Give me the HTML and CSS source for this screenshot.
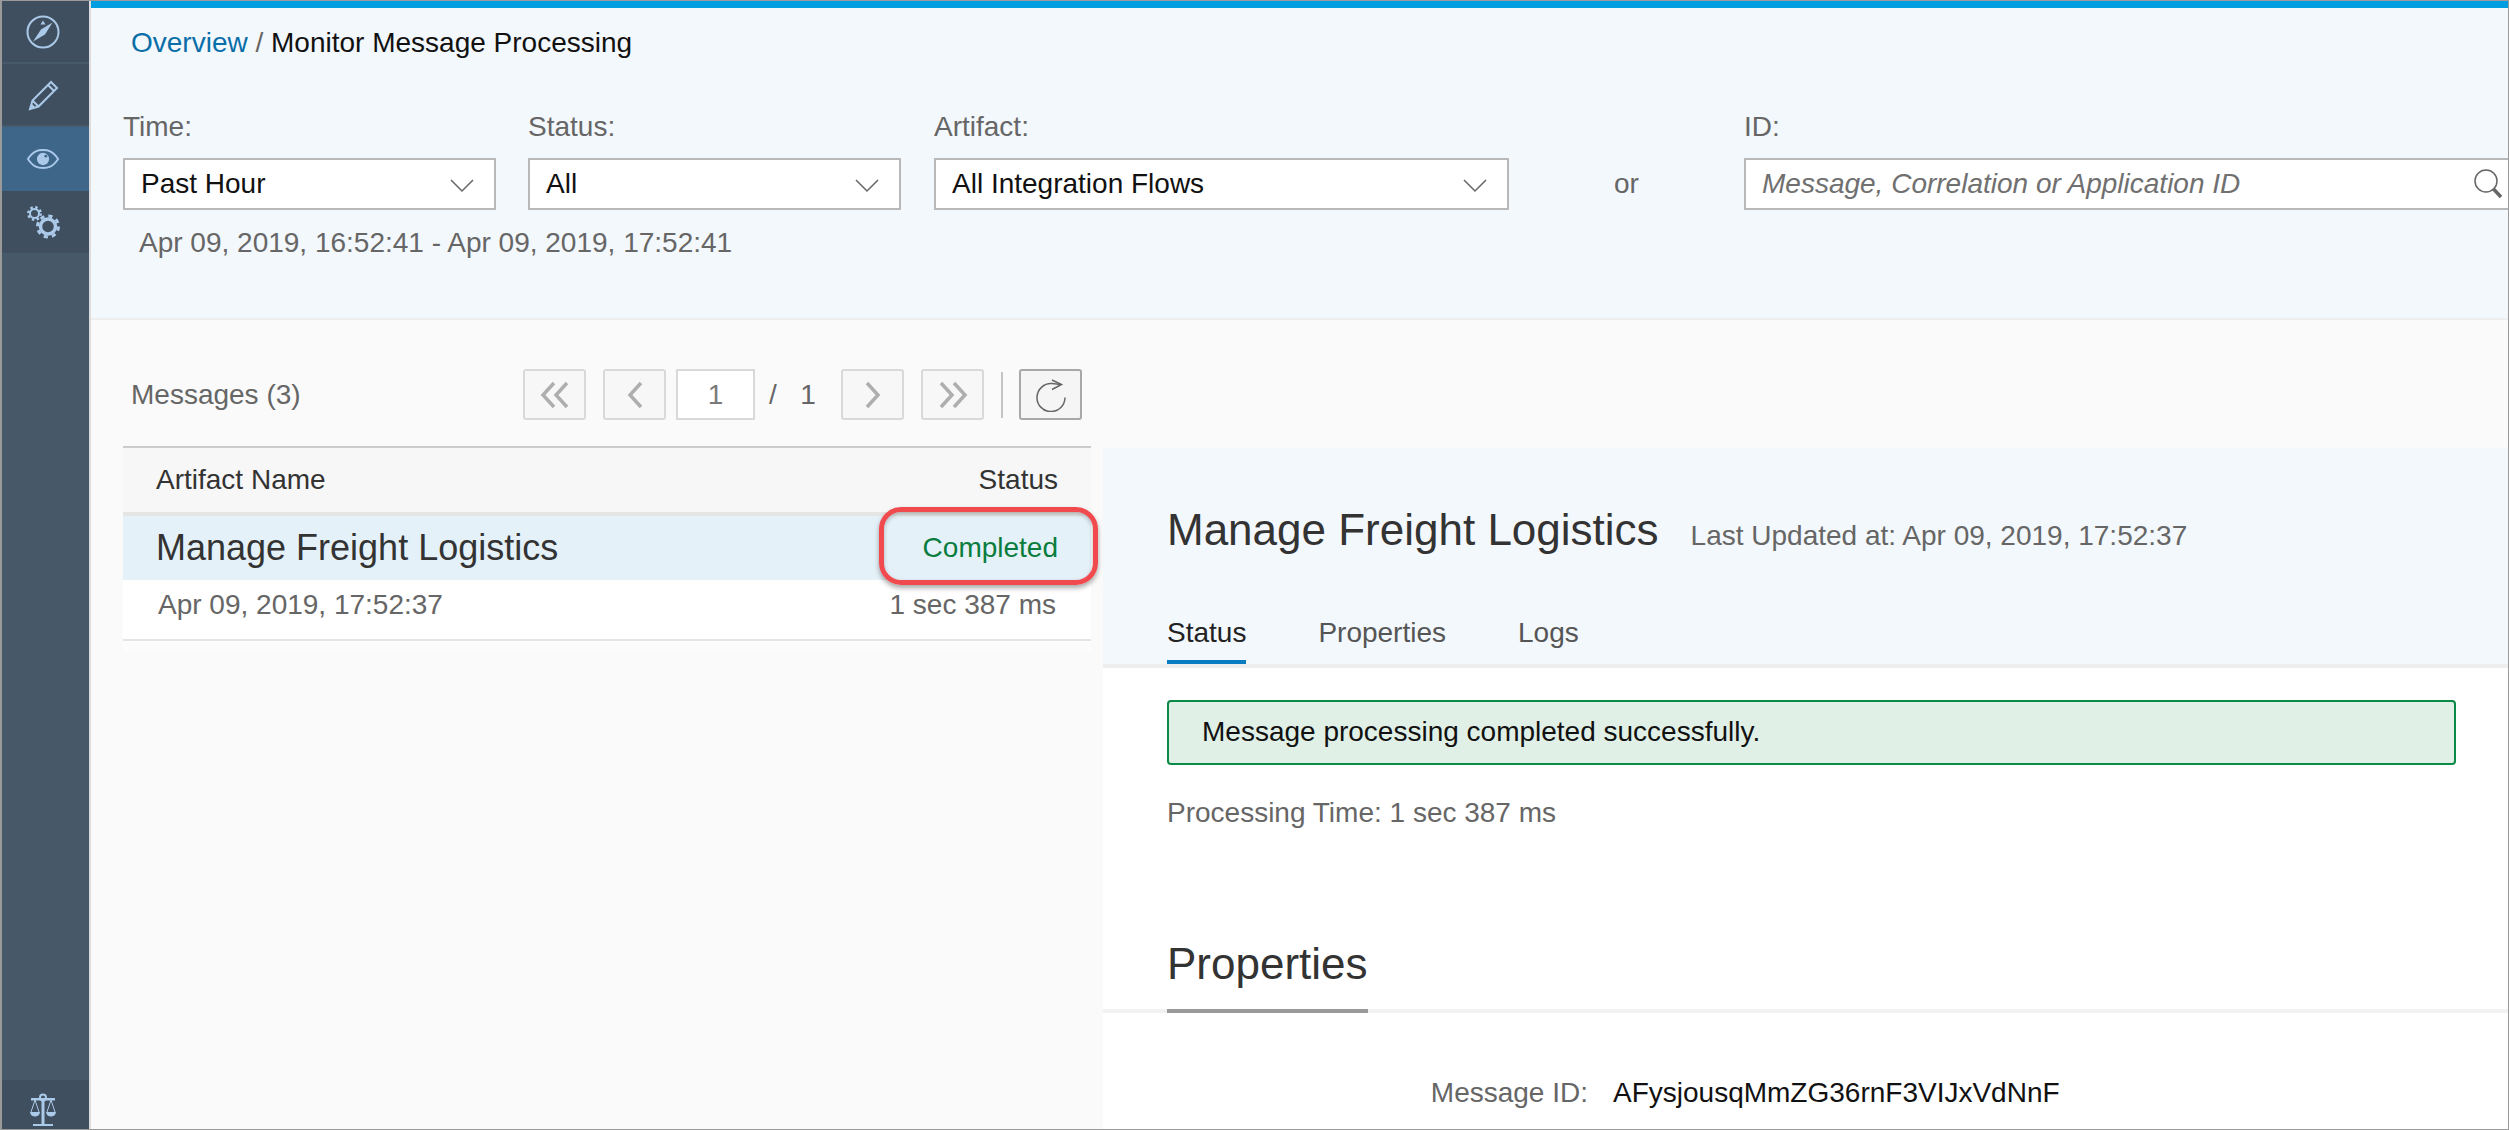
FILE: index.html
```html
<!DOCTYPE html>
<html lang="en">
<head>
    <meta charset="UTF-8">
    <title>Monitor Message Processing</title>
    <link rel="stylesheet" href="styles.css">
</head>
<body>
    <div class="frame">
        <aside class="sidebar">
            <a class="side-item">
                <svg width="36" height="36" viewBox="0 0 36 36"><circle cx="18" cy="18" r="15.5" fill="none" stroke="#abc9e8" stroke-width="2"/><path d="M27.5 8.5 L20 20.5 L8 27.5 L16 15.5 Z" fill="#abc9e8"/><path d="M18 6.5 L20.5 10.5 L15.5 10.5 Z" fill="#abc9e8"/></svg>
            </a>
            <a class="side-item">
                <svg width="32" height="32" viewBox="0 0 32 32"><path d="M3 30 L5.5 21.5 L24 3 L30 9 L11.5 27.5 Z M5.5 21.5 L11.5 27.5 M21 6 L27 12" fill="none" stroke="#abc9e8" stroke-width="2"/><path d="M3 30 L4.5 24.5 L8.5 28.5 Z" fill="#abc9e8"/></svg>
            </a>
            <a class="side-item active">
                <svg width="34" height="24" viewBox="0 0 36 24"><path d="M2 12 C8 3 13 2.500 18 2.500 C23 2.500 28 3 34 12 C28 21 23 21.500 18 21.500 C13 21.500 8 21 2 12 Z" fill="none" stroke="#abc9e8" stroke-width="2"/><circle cx="18" cy="12" r="6.500" fill="#abc9e8"/><circle cx="21" cy="9" r="1.500" fill="#3d6689"/></svg>
            </a>
            <a class="side-item gears">
                <svg width="36" height="36" viewBox="0 0 36 36"><circle cx="9.500" cy="9.500" r="4.500" fill="none" stroke="#abc9e8" stroke-width="2"/><circle cx="9.500" cy="9.500" r="6.200" fill="none" stroke="#abc9e8" stroke-width="2.500" stroke-dasharray="2.400 2.470"/><circle cx="23" cy="22.500" r="7.500" fill="none" stroke="#abc9e8" stroke-width="3.500"/><circle cx="23" cy="22.500" r="10.500" fill="none" stroke="#abc9e8" stroke-width="3" stroke-dasharray="4.200 4.050"/></svg>
            </a>
            <a class="side-item side-bottom">
                <svg width="30" height="34" viewBox="0 0 30 34"><circle cx="15" cy="4.500" r="3" fill="none" stroke="#abc9e8" stroke-width="2"/><path d="M3 5 H27 V7.500 H3 Z M13.500 7 H16.500 V31 H13.500 Z M5 31 H25 V33 H5 Z" fill="#abc9e8"/><path d="M2 19 H12 C11.500 25 2.500 25 2 19 Z M18 19 H28 C27.500 25 18.500 25 18 19 Z" fill="#abc9e8"/><path d="M7 7 L3 19 M7 7 L11 19 M23 7 L19 19 M23 7 L27 19" fill="none" stroke="#abc9e8" stroke-width="1"/></svg>
            </a>
        </aside>
        <main class="main">
            <header class="top">
                <div class="crumbs"><a class="link">Overview</a> <span class="slash">/</span> Monitor Message Processing</div>
                <div class="filters">
                    <div class="field f-time">
                        <label>Time:</label>
                        <div class="control">Past Hour<svg class="chev" width="24" height="14" viewBox="0 0 24 14"><path d="M1 1 L12 12 L23 1" fill="none" stroke="#666" stroke-width="1.500"/></svg></div>
                    </div>
                    <div class="field f-status">
                        <label>Status:</label>
                        <div class="control">All<svg class="chev" width="24" height="14" viewBox="0 0 24 14"><path d="M1 1 L12 12 L23 1" fill="none" stroke="#666" stroke-width="1.500"/></svg></div>
                    </div>
                    <div class="field f-artifact">
                        <label>Artifact:</label>
                        <div class="control">All Integration Flows<svg class="chev" width="24" height="14" viewBox="0 0 24 14"><path d="M1 1 L12 12 L23 1" fill="none" stroke="#666" stroke-width="1.500"/></svg></div>
                    </div>
                    <div class="or">or</div>
                    <div class="field f-id">
                        <label>ID:</label>
                        <div class="control search"><span class="placeholder">Message, Correlation or Application ID</span><svg width="30" height="32" viewBox="0 0 30 32"><circle cx="13" cy="13" r="11" fill="none" stroke="#666" stroke-width="1.500"/><path d="M20.500 21 L28 29" stroke="#666" stroke-width="3.500"/></svg></div>
                    </div>
                </div>
                <div class="range">Apr 09, 2019, 16:52:41 - Apr 09, 2019, 17:52:41</div>
            </header>
            <div class="content">
                <section class="list">
                    <div class="toolbar">
                        <div class="count">Messages (3)</div>
                        <div class="pager">
                            <button class="pg"><svg width="32" height="28" viewBox="0 0 32 28"><path d="M15 2 L4 14 L15 26 M28 2 L17 14 L28 26" fill="none" stroke="#aeaeae" stroke-width="3.500"/></svg></button>
                            <button class="pg"><svg width="20" height="28" viewBox="0 0 20 28"><path d="M16 2 L5 14 L16 26" fill="none" stroke="#aeaeae" stroke-width="3.500"/></svg></button>
                            <div class="page-input">1</div>
                            <span class="of">/</span>
                            <span class="total">1</span>
                            <button class="pg"><svg width="20" height="28" viewBox="0 0 20 28"><path d="M4 2 L15 14 L4 26" fill="none" stroke="#aeaeae" stroke-width="3.500"/></svg></button>
                            <button class="pg"><svg width="32" height="28" viewBox="0 0 32 28"><path d="M4 2 L15 14 L4 26 M17 2 L28 14 L17 26" fill="none" stroke="#aeaeae" stroke-width="3.500"/></svg></button>
                            <span class="sep"></span>
                            <button class="pg refresh"><svg width="32" height="34" viewBox="0 0 32 34"><path d="M26 6.500 L17 5.600 A14 14 0 1 0 30 19.500" fill="none" stroke="#666" stroke-width="1.500"/><path d="M17 2 L26.500 6.500 L17 11.500" fill="none" stroke="#666" stroke-width="1.500"/></svg></button>
                        </div>
                    </div>
                    <div class="table">
                        <div class="thead"><span>Artifact Name</span><span>Status</span></div>
                        <div class="row-main"><span class="name">Manage Freight Logistics</span><span class="ok">Completed</span><span class="callout"></span></div>
                        <div class="row-sub"><span>Apr 09, 2019, 17:52:37</span><span>1 sec 387 ms</span></div>
                    </div>
                </section>
                <section class="detail">
                    <div class="detail-head">
                        <div class="title-line">
                            <h2>Manage Freight Logistics</h2>
                            <span class="updated">Last Updated at: Apr 09, 2019, 17:52:37</span>
                        </div>
                        <nav class="tabs">
                            <a class="tab current">Status</a>
                            <a class="tab">Properties</a>
                            <a class="tab">Logs</a>
                        </nav>
                    </div>
                    <div class="detail-body">
                        <div class="alert">Message processing completed successfully.</div>
                        <p class="ptime">Processing Time: 1 sec 387 ms</p>
                    </div>
                    <div class="props-head"><h3>Properties</h3></div>
                    <div class="prop-row"><span class="prop-label">Message ID:</span><span class="prop-value">AFysjousqMmZG36rnF3VIJxVdNnF</span></div>
                </section>
            </div>
        </main>
    </div>
</body>
</html>
```

FILE: styles.css
```css
* {
    margin: 0;
    padding: 0;
    box-sizing: border-box;
}
html, body {
    height: 100%;
    overflow: hidden;
}
body {
    font-family: 'Liberation Sans', Arial, sans-serif;
    font-size: 28px;
    color: #666666;
    background-color: #fafafa;
}
.frame {
    display: flex;
    width: 2509px;
    height: 1130px;
    overflow: hidden;
    border-top: 1px solid #9a9a9a;
    border-left: 2px solid #9a9a9a;
    border-right: 1px solid #9a9a9a;
    border-bottom: 1px solid #9a9a9a;
}
.sidebar {
    display: flex;
    flex-direction: column;
    flex: none;
    width: 89px;
    background-color: #475869;
    border-right: 2px solid #dcdcdc;
}
.side-item {
    display: flex;
    align-items: center;
    justify-content: center;
    height: 63px;
    padding-right: 6px;
    background-color: #3f4f5f;
    border-bottom: 2px solid #465a6c;
}
.side-item.active {
    height: 64px;
    background-color: #3d6689;
    border-bottom: none;
}
.gears {
    height: 64px;
}
.side-bottom {
    margin-top: auto;
    height: 49px;
    padding-bottom: 2px;
    border-bottom: none;
    align-items: flex-end;
}
.main {
    flex: 1;
    display: flex;
    flex-direction: column;
    min-width: 0;
}
.top {
    height: 319px;
    background-color: #f3f8fc;
    border-top: 7px solid #009de0;
    border-bottom: 2px solid #eeeeee;
    padding: 18px 0 0 32px;
}
.crumbs {
    padding-left: 8px;
    height: 34px;
    line-height: 34px;
    color: #111111;
}
.link {
    color: #0a6ea8;
}
.slash {
    color: #666666;
}
.filters {
    display: flex;
    margin-top: 51px;
}
.field label {
    display: block;
    height: 32px;
    line-height: 32px;
    margin-bottom: 15px;
}
.f-time {
    width: 373px;
    margin-right: 32px;
}
.f-status {
    width: 373px;
    margin-right: 33px;
}
.f-artifact {
    width: 575px;
}
.f-id {
    flex: 1;
}
.control {
    display: flex;
    align-items: center;
    justify-content: space-between;
    height: 52px;
    background-color: #ffffff;
    border: 2px solid #b8b8b8;
    padding: 0 20px 0 16px;
    color: #111111;
}
.chev {
    margin-top: 3px;
}
.search {
    border-right: none;
    padding-right: 5px;
}
.placeholder {
    font-style: italic;
    color: #707070;
}
.or {
    width: 235px;
    text-align: center;
    line-height: 52px;
    margin-top: 47px;
}
.range {
    padding-left: 16px;
    margin-top: 16px;
    height: 34px;
    line-height: 34px;
}
.content {
    flex: 1;
    display: flex;
    min-height: 0;
}
.list {
    flex: none;
    width: 1012px;
    padding-left: 32px;
    padding-right: 12px;
}
.toolbar {
    display: flex;
    align-items: center;
    height: 51px;
    margin-top: 49px;
    margin-bottom: 26px;
}
.count {
    width: 400px;
    padding-left: 8px;
}
.pager {
    display: flex;
    align-items: center;
}
.pg {
    display: flex;
    align-items: center;
    justify-content: center;
    width: 63px;
    height: 51px;
    background-color: #f7f7f7;
    border: 2px solid #d9d9d9;
    border-radius: 3px;
    margin-right: 17px;
}
.pg:nth-of-type(2) {
    margin-right: 10px;
}
.page-input {
    width: 79px;
    height: 51px;
    line-height: 47px;
    text-align: center;
    color: #7a7a7a;
    background-color: #ffffff;
    border: 2px solid #d9d9d9;
}
.of {
    width: 36px;
    text-align: center;
}
.total {
    width: 34px;
    margin-right: 16px;
    text-align: center;
}
.sep {
    width: 2px;
    height: 46px;
    background-color: #c4c4c4;
    margin: 0 16px 0 0;
}
.refresh {
    border-color: #a8a8a8;
    background-color: #f5f5f5;
    margin-right: 0;
}
.table {
    background-color: #fcfcfc;
    padding-bottom: 10px;
}
.thead, .row-main, .row-sub {
    display: flex;
    align-items: center;
    justify-content: space-between;
    padding: 0 33px;
}
.thead {
    height: 70px;
    background-color: #f7f7f7;
    border-top: 2px solid #cccccc;
    border-bottom: 4px solid #e5e5e5;
    color: #333333;
}
.row-main {
    position: relative;
    height: 64px;
    background-color: #e5f1f9;
}
.name {
    font-size: 36px;
    color: #333333;
}
.ok {
    color: #0a7d3e;
}
.callout {
    position: absolute;
    left: 756px;
    top: -9px;
    width: 219px;
    height: 78px;
    border: 5px solid #f04a4f;
    border-radius: 22px;
    box-shadow: 0 3px 5px rgba(0, 0, 0, 0.35), inset 0 2px 4px rgba(0, 0, 0, 0.25);
}
.row-sub {
    height: 61px;
    background-color: #ffffff;
    border-bottom: 2px solid #e5e5e5;
    padding: 0 35px 9px;
}
.detail {
    flex: 1;
    margin-top: 128px;
    background-color: #ffffff;
}
.detail-head {
    height: 220px;
    background-color: #f3f8fc;
    border-bottom: 4px solid #eeeeee;
    padding: 0 0 0 64px;
}
.title-line {
    display: flex;
    align-items: baseline;
    padding-top: 57px;
    height: 152px;
}
h2, h3 {
    font-size: 44px;
    font-weight: 400;
    color: #333333;
}
.updated {
    margin-left: 32px;
}
.tabs {
    display: flex;
    gap: 72px;
}
.tab {
    height: 64px;
    line-height: 66px;
    border-bottom: 4px solid transparent;
    color: #555555;
}
.tab.current {
    color: #222222;
    border-bottom-color: #0a7cc1;
}
.detail-body {
    padding: 32px 52px 0 64px;
}
.alert {
    height: 65px;
    line-height: 60px;
    background-color: #e0f0e6;
    border: 2px solid #0a8a46;
    border-radius: 4px;
    padding-left: 33px;
    color: #111111;
}
.ptime {
    margin-top: 31px;
    line-height: 34px;
}
.props-head {
    margin-top: 97px;
    height: 86px;
    border-bottom: 4px solid #f2f2f2;
    padding-left: 64px;
}
h3 {
    display: inline-block;
    height: 86px;
    line-height: 74px;
    border-bottom: 4px solid #999999;
}
.prop-row {
    display: flex;
    margin-top: 63px;
    line-height: 34px;
}
.prop-label {
    width: 485px;
    text-align: right;
}
.prop-value {
    margin-left: 25px;
    color: #111111;
}
```
